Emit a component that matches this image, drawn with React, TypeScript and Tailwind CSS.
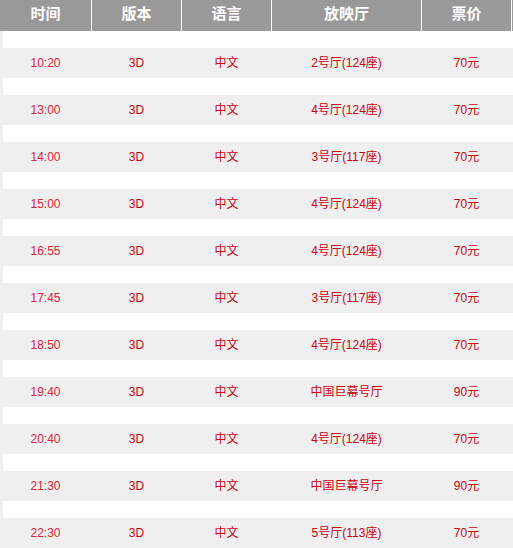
import React from 'react'

const rows = [
  ['10:20', '3D', '中文', '2号厅(124座)', '70元'],
  ['13:00', '3D', '中文', '4号厅(124座)', '70元'],
  ['14:00', '3D', '中文', '3号厅(117座)', '70元'],
  ['15:00', '3D', '中文', '4号厅(124座)', '70元'],
  ['16:55', '3D', '中文', '4号厅(124座)', '70元'],
  ['17:45', '3D', '中文', '3号厅(117座)', '70元'],
  ['18:50', '3D', '中文', '4号厅(124座)', '70元'],
  ['19:40', '3D', '中文', '中国巨幕号厅', '90元'],
  ['20:40', '3D', '中文', '4号厅(124座)', '70元'],
  ['21:30', '3D', '中文', '中国巨幕号厅', '90元'],
  ['22:30', '3D', '中文', '5号厅(113座)', '70元'],
]

const cols = 'grid grid-cols-[91px_89px_89px_149px_89px_1fr] gap-x-px'

export default function App() {
  return (
    <div className="w-[513px] bg-white font-['Liberation_Sans','Noto_Sans_CJK_SC',sans-serif]">
      {/* header */}
      <div className={`${cols} h-[31px] bg-white`}>
        {['时间', '版本', '语言', '放映厅', '票价'].map((h) => (
          <div key={h} className="flex items-center justify-center bg-[#999999] pb-[2px] text-[15px] font-bold text-white">
            {h}
          </div>
        ))}
        <div className="bg-[#999999]" />
      </div>

      {rows.map((r, i) => (
        <div key={i}>
          <div className={`h-[17px] border-l-[3px] border-[#f0f0f0] ${i === 0 ? 'h-[16px]' : ''}`} />
          <div className={`${cols} h-[30px] bg-[#efefef]`}>
            {r.map((c, j) => (
              <div
                key={j}
                className={`flex items-center justify-center text-[12px] ${j === 0 ? 'text-[#d9243a]' : 'text-[#cc0011]'}`}
              >
                {c}
              </div>
            ))}
            <div />
          </div>
        </div>
      ))}
    </div>
  )
}
